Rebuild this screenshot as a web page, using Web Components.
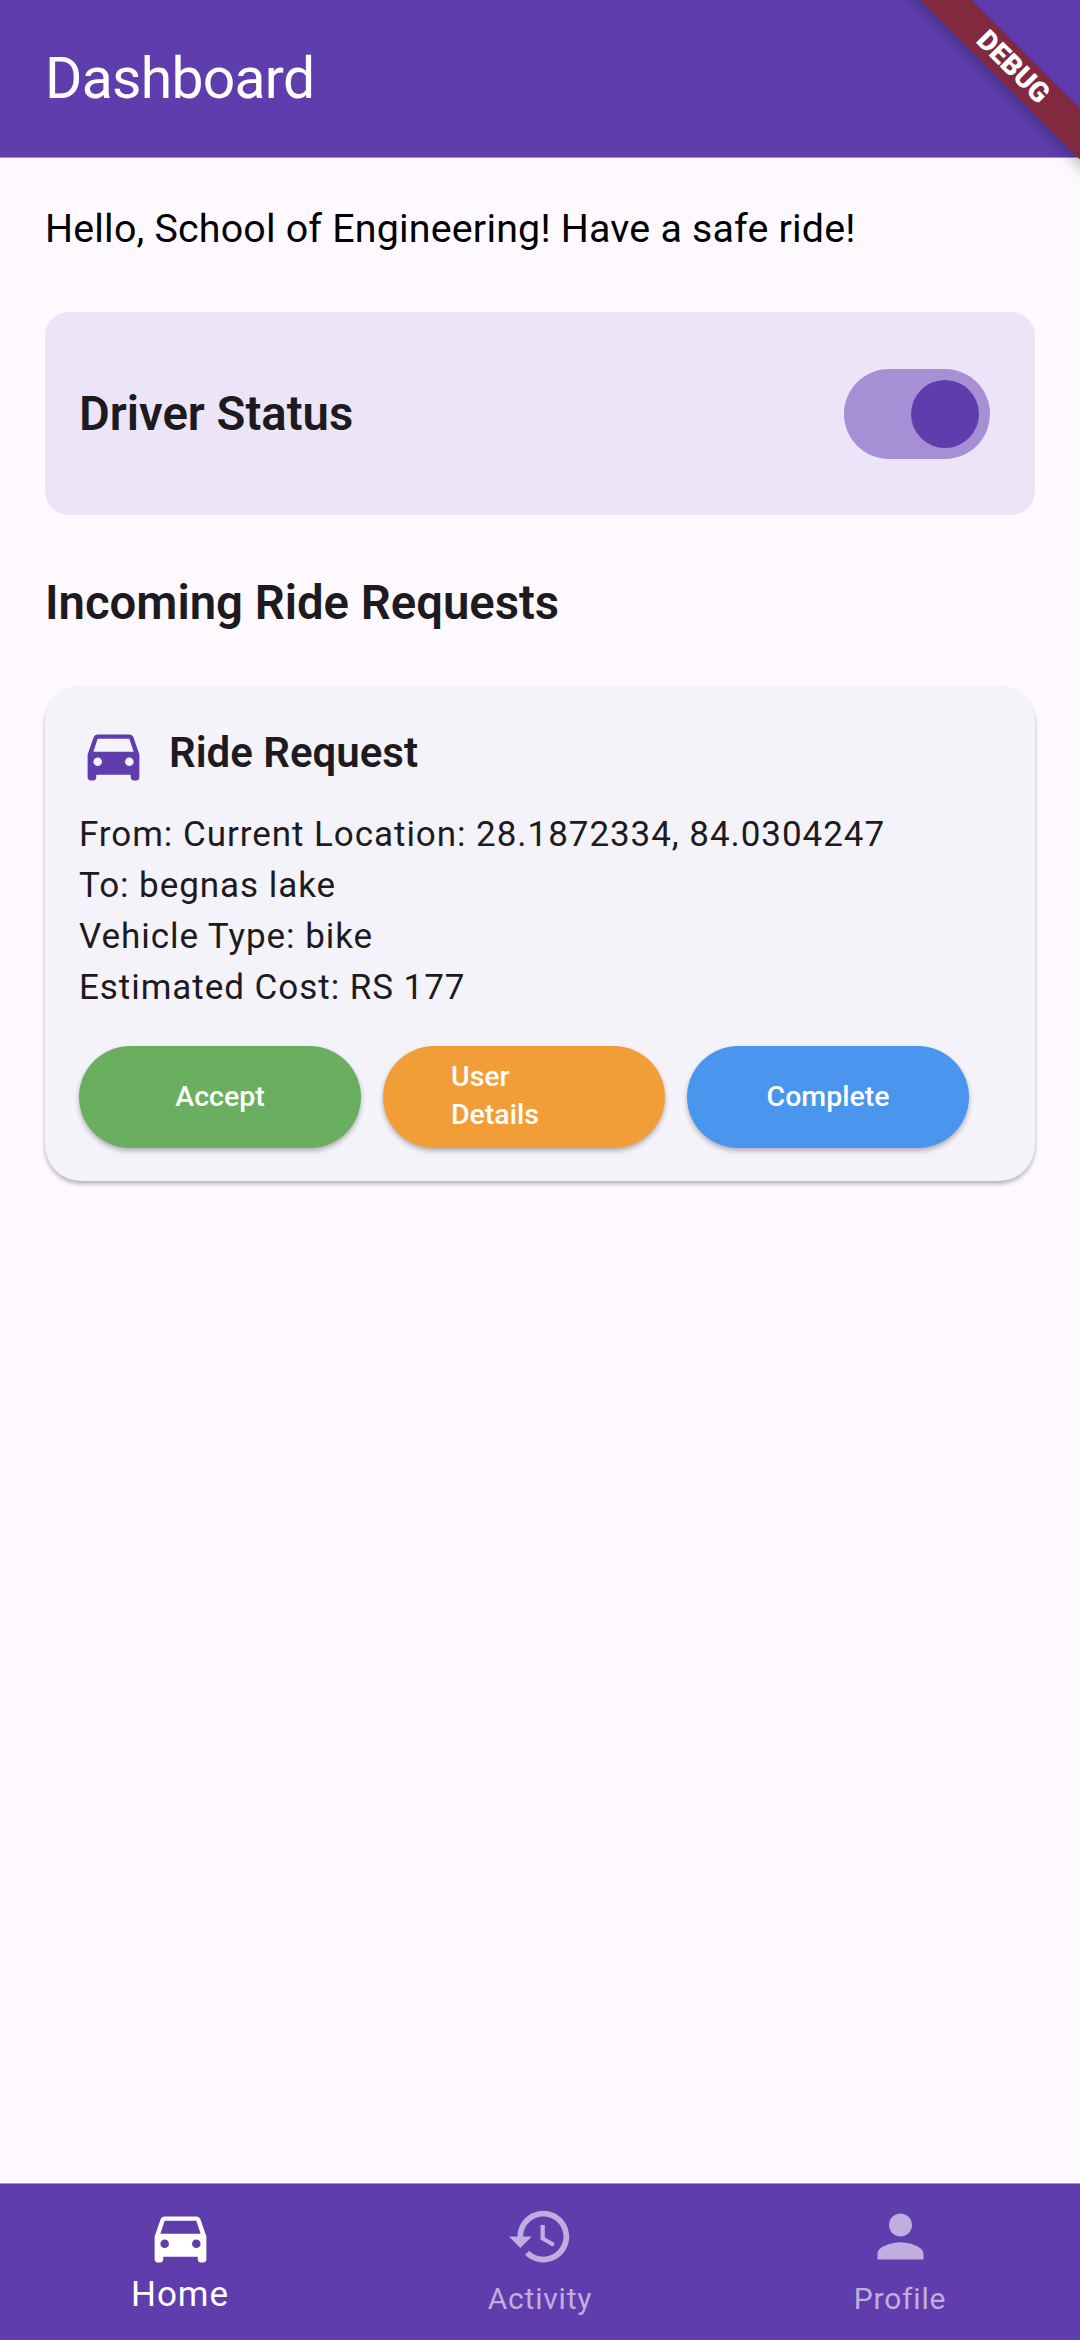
<!DOCTYPE html>
<html lang="en">
<head>
<meta charset="utf-8">
<title>Dashboard</title>
<style>
  html, body {
    margin: 0;
    height: 100%;
    overflow: hidden;
    background: #fdf9fe;
    font-family: Roboto, "Liberation Sans", sans-serif;
  }
</style>
</head>
<body>
<driver-app>
  <app-bar slot="top" heading="Dashboard"></app-bar>

  <p-greeting>Hello, School of Engineering! Have a safe ride!</p-greeting>

  <status-card label="Driver Status"></status-card>

  <section-title>Incoming Ride Requests</section-title>

  <ride-card heading="Ride Request">
    <div>From: Current Location: 28.1872334, 84.0304247</div>
    <div>To: begnas lake</div>
    <div>Vehicle Type: bike</div>
    <div>Estimated Cost: RS 177</div>
    <pill-button slot="actions" color="#6aae5f">Accept</pill-button>
    <pill-button slot="actions" color="#f29e38" align="start">User<br>Details</pill-button>
    <pill-button slot="actions" color="#4a96ee">Complete</pill-button>
  </ride-card>

  <bottom-nav slot="bottom">
    <nav-item icon="car" label="Home" active></nav-item>
    <nav-item icon="history" label="Activity"></nav-item>
    <nav-item icon="person" label="Profile"></nav-item>
  </bottom-nav>

  <debug-banner slot="overlay"></debug-banner>
</driver-app>

<script>
const iconPaths = {
  car: "M18.92 6.01C18.72 5.42 18.16 5 17.5 5h-11c-.66 0-1.21.42-1.42 1.01L3 12v8c0 .55.45 1 1 1h1c.55 0 1-.45 1-1v-1h12v1c0 .55.45 1 1 1h1c.55 0 1-.45 1-1v-8l-2.08-5.99zM6.5 16c-.83 0-1.5-.67-1.5-1.5S5.67 13 6.5 13s1.5.67 1.5 1.5S7.33 16 6.5 16zm11 0c-.83 0-1.5-.67-1.5-1.5s.67-1.5 1.5-1.5 1.5.67 1.5 1.5-.67 1.5-1.5 1.5zM5 11l1.5-4.5h11L19 11H5z",
  history: "M13 3c-4.97 0-9 4.03-9 9H1l3.89 3.89.07.14L9 12H6c0-3.87 3.13-7 7-7s7 3.13 7 7-3.13 7-7 7c-1.93 0-3.68-.79-4.94-2.06l-1.42 1.42C8.27 19.99 10.51 21 13 21c4.97 0 9-4.03 9-9s-4.03-9-9-9zm-1 5v5l4.28 2.54.72-1.21-3.5-2.08V8H12z",
  person: "M12 12c2.21 0 4-1.79 4-4s-1.79-4-4-4-4 1.79-4 4 1.79 4 4 4zm0 2c-2.67 0-8 1.34-8 4v2h16v-2c0-2.66-5.33-4-8-4z",
};

function iconSvg(name, size, color) {
  return `<svg width="${size}" height="${size}" viewBox="0 0 24 24" fill="${color}"><path d="${iconPaths[name]}"/></svg>`;
}

class ShadowBase extends HTMLElement {
  constructor() {
    super();
    this.attachShadow({ mode: "open" });
  }

  connectedCallback() {
    this.render();
  }
}

class DriverApp extends ShadowBase {
  render() {
    this.shadowRoot.innerHTML = `
      <style>
        :host {
          display: flex;
          flex-direction: column;
          position: relative;
          width: 1080px;
          height: 2340px;
          overflow: hidden;
        }

        main {
          flex: 1;
          display: flex;
          flex-direction: column;
          padding: 0 45px;
        }
      </style>
      <slot name="top"></slot>
      <main><slot></slot></main>
      <slot name="bottom"></slot>
      <slot name="overlay"></slot>
    `;
  }
}

class AppBar extends ShadowBase {
  render() {
    this.shadowRoot.innerHTML = `
      <style>
        :host {
          display: flex;
          align-items: center;
          box-sizing: border-box;
          height: 158px;
          padding-left: 45px;
          background: #5f3dad;
          border-bottom: 1px solid #a78fd6;
          color: #fff;
          font-size: 57px;
          letter-spacing: -0.7px;
          line-height: 1;
        }
      </style>
      <span>${this.getAttribute("heading")}</span>
    `;
  }
}

class DebugBanner extends ShadowBase {
  render() {
    this.shadowRoot.innerHTML = `
      <style>
        :host {
          position: absolute;
          top: 67px;
          left: 1013px;
          width: 0;
          height: 0;
        }

        div {
          position: absolute;
          left: -170px;
          top: -18px;
          width: 340px;
          height: 36px;
          transform: rotate(45deg);
          background: #80293f;
          box-shadow: 0 6px 12px rgba(0, 0, 0, 0.2);
          color: #fff;
          font-size: 28px;
          font-weight: 900;
          line-height: 36px;
          text-align: center;
        }
      </style>
      <div>DEBUG</div>
    `;
  }
}

class PGreeting extends ShadowBase {
  render() {
    this.shadowRoot.innerHTML = `
      <style>
        :host {
          display: block;
          margin-top: 48px;
          color: #000;
          font-size: 39.375px;
          font-weight: 450;
          line-height: 46px;
          letter-spacing: 0.2px;
        }
      </style>
      <slot></slot>
    `;
  }
}

class StatusCard extends ShadowBase {
  render() {
    this.shadowRoot.innerHTML = `
      <style>
        :host {
          display: flex;
          align-items: center;
          justify-content: space-between;
          box-sizing: border-box;
          height: 203px;
          margin-top: 60px;
          padding: 0 45px 0 34px;
          border-radius: 24px;
          background: #ece5f7;
          color: #1d1b20;
          font-size: 47.25px;
          font-weight: 600;
        }
      </style>
      <span>${this.getAttribute("label")}</span>
      <toggle-switch></toggle-switch>
    `;
  }
}

class ToggleSwitch extends ShadowBase {
  render() {
    this.shadowRoot.innerHTML = `
      <style>
        :host {
          display: flex;
          align-items: center;
          justify-content: flex-end;
          box-sizing: border-box;
          width: 146px;
          height: 90px;
          padding-right: 11px;
          border-radius: 45px;
          background: #a78fd6;
        }

        div {
          width: 68px;
          height: 68px;
          border-radius: 50%;
          background: #5f3dad;
        }
      </style>
      <div></div>
    `;
  }
}

class SectionTitle extends ShadowBase {
  render() {
    this.shadowRoot.innerHTML = `
      <style>
        :host {
          display: block;
          margin-top: 58px;
          color: #1d1b20;
          font-size: 47.25px;
          font-weight: 600;
          line-height: 60px;
        }
      </style>
      <slot></slot>
    `;
  }
}

class RideCard extends ShadowBase {
  render() {
    this.shadowRoot.innerHTML = `
      <style>
        :host {
          display: block;
          box-sizing: border-box;
          height: 495px;
          margin-top: 53px;
          padding: 34px 34px 0;
          border-radius: 36px;
          background: #f5f3fa;
          box-shadow: 0 3px 4px rgba(0, 0, 0, 0.28);
        }

        header {
          display: flex;
          align-items: center;
          gap: 21px;
          height: 68px;
          color: #1d1b20;
          font-size: 42px;
          font-weight: 600;
        }

        header span {
          margin-top: -4px;
        }

        svg {
          display: block;
        }

        .info {
          margin-top: 21px;
          color: #1d1b20;
          font-size: 35px;
          line-height: 51px;
          letter-spacing: 0.95px;
        }

        .actions {
          display: flex;
          gap: 22px;
          margin-top: 33px;
        }
      </style>
      <header>${iconSvg("car", 69, "#5f3dad")}<span>${this.getAttribute("heading")}</span></header>
      <div class="info"><slot></slot></div>
      <div class="actions"><slot name="actions"></slot></div>
    `;
  }
}

class PillButton extends ShadowBase {
  render() {
    const start = this.getAttribute("align") === "start";
    this.shadowRoot.innerHTML = `
      <style>
        :host {
          display: flex;
          align-items: center;
          justify-content: ${start ? "flex-start" : "center"};
          box-sizing: border-box;
          width: 282px;
          height: 102px;
          padding-left: ${start ? "68px" : "0"};
          padding-bottom: ${start ? "2px" : "0"};
          border-radius: 51px;
          background: ${this.getAttribute("color")};
          box-shadow: 0 3px 5px rgba(0, 0, 0, 0.28);
          color: #fff;
          font-size: 28.5px;
          font-weight: 500;
          line-height: 38px;
        }
      </style>
      <span><slot></slot></span>
    `;
  }
}

class BottomNav extends ShadowBase {
  render() {
    this.shadowRoot.innerHTML = `
      <style>
        :host {
          display: grid;
          grid-template-columns: repeat(3, 1fr);
          box-sizing: border-box;
          height: 157px;
          background: #5f3dad;
          border-top: 1px solid #a78fd6;
        }
      </style>
      <slot></slot>
    `;
  }
}

class NavItem extends ShadowBase {
  render() {
    const active = this.hasAttribute("active");
    const color = active ? "#ffffff" : "#bfaede";
    this.shadowRoot.innerHTML = `
      <style>
        :host {
          display: flex;
          flex-direction: column;
          align-items: center;
          padding-top: 18px;
          color: ${color};
          font-size: ${active ? "35px" : "30px"};
          line-height: 42px;
          letter-spacing: ${active ? "0.9px" : "0.8px"};
        }

        span {
          margin-top: ${active ? "3px" : "7px"};
        }

        svg {
          display: block;
        }
      </style>
      ${iconSvg(this.getAttribute("icon"), 69, color)}
      <span>${this.getAttribute("label")}</span>
    `;
  }
}

customElements.define("driver-app", DriverApp);
customElements.define("app-bar", AppBar);
customElements.define("debug-banner", DebugBanner);
customElements.define("p-greeting", PGreeting);
customElements.define("status-card", StatusCard);
customElements.define("toggle-switch", ToggleSwitch);
customElements.define("section-title", SectionTitle);
customElements.define("ride-card", RideCard);
customElements.define("pill-button", PillButton);
customElements.define("bottom-nav", BottomNav);
customElements.define("nav-item", NavItem);
</script>
</body>
</html>
